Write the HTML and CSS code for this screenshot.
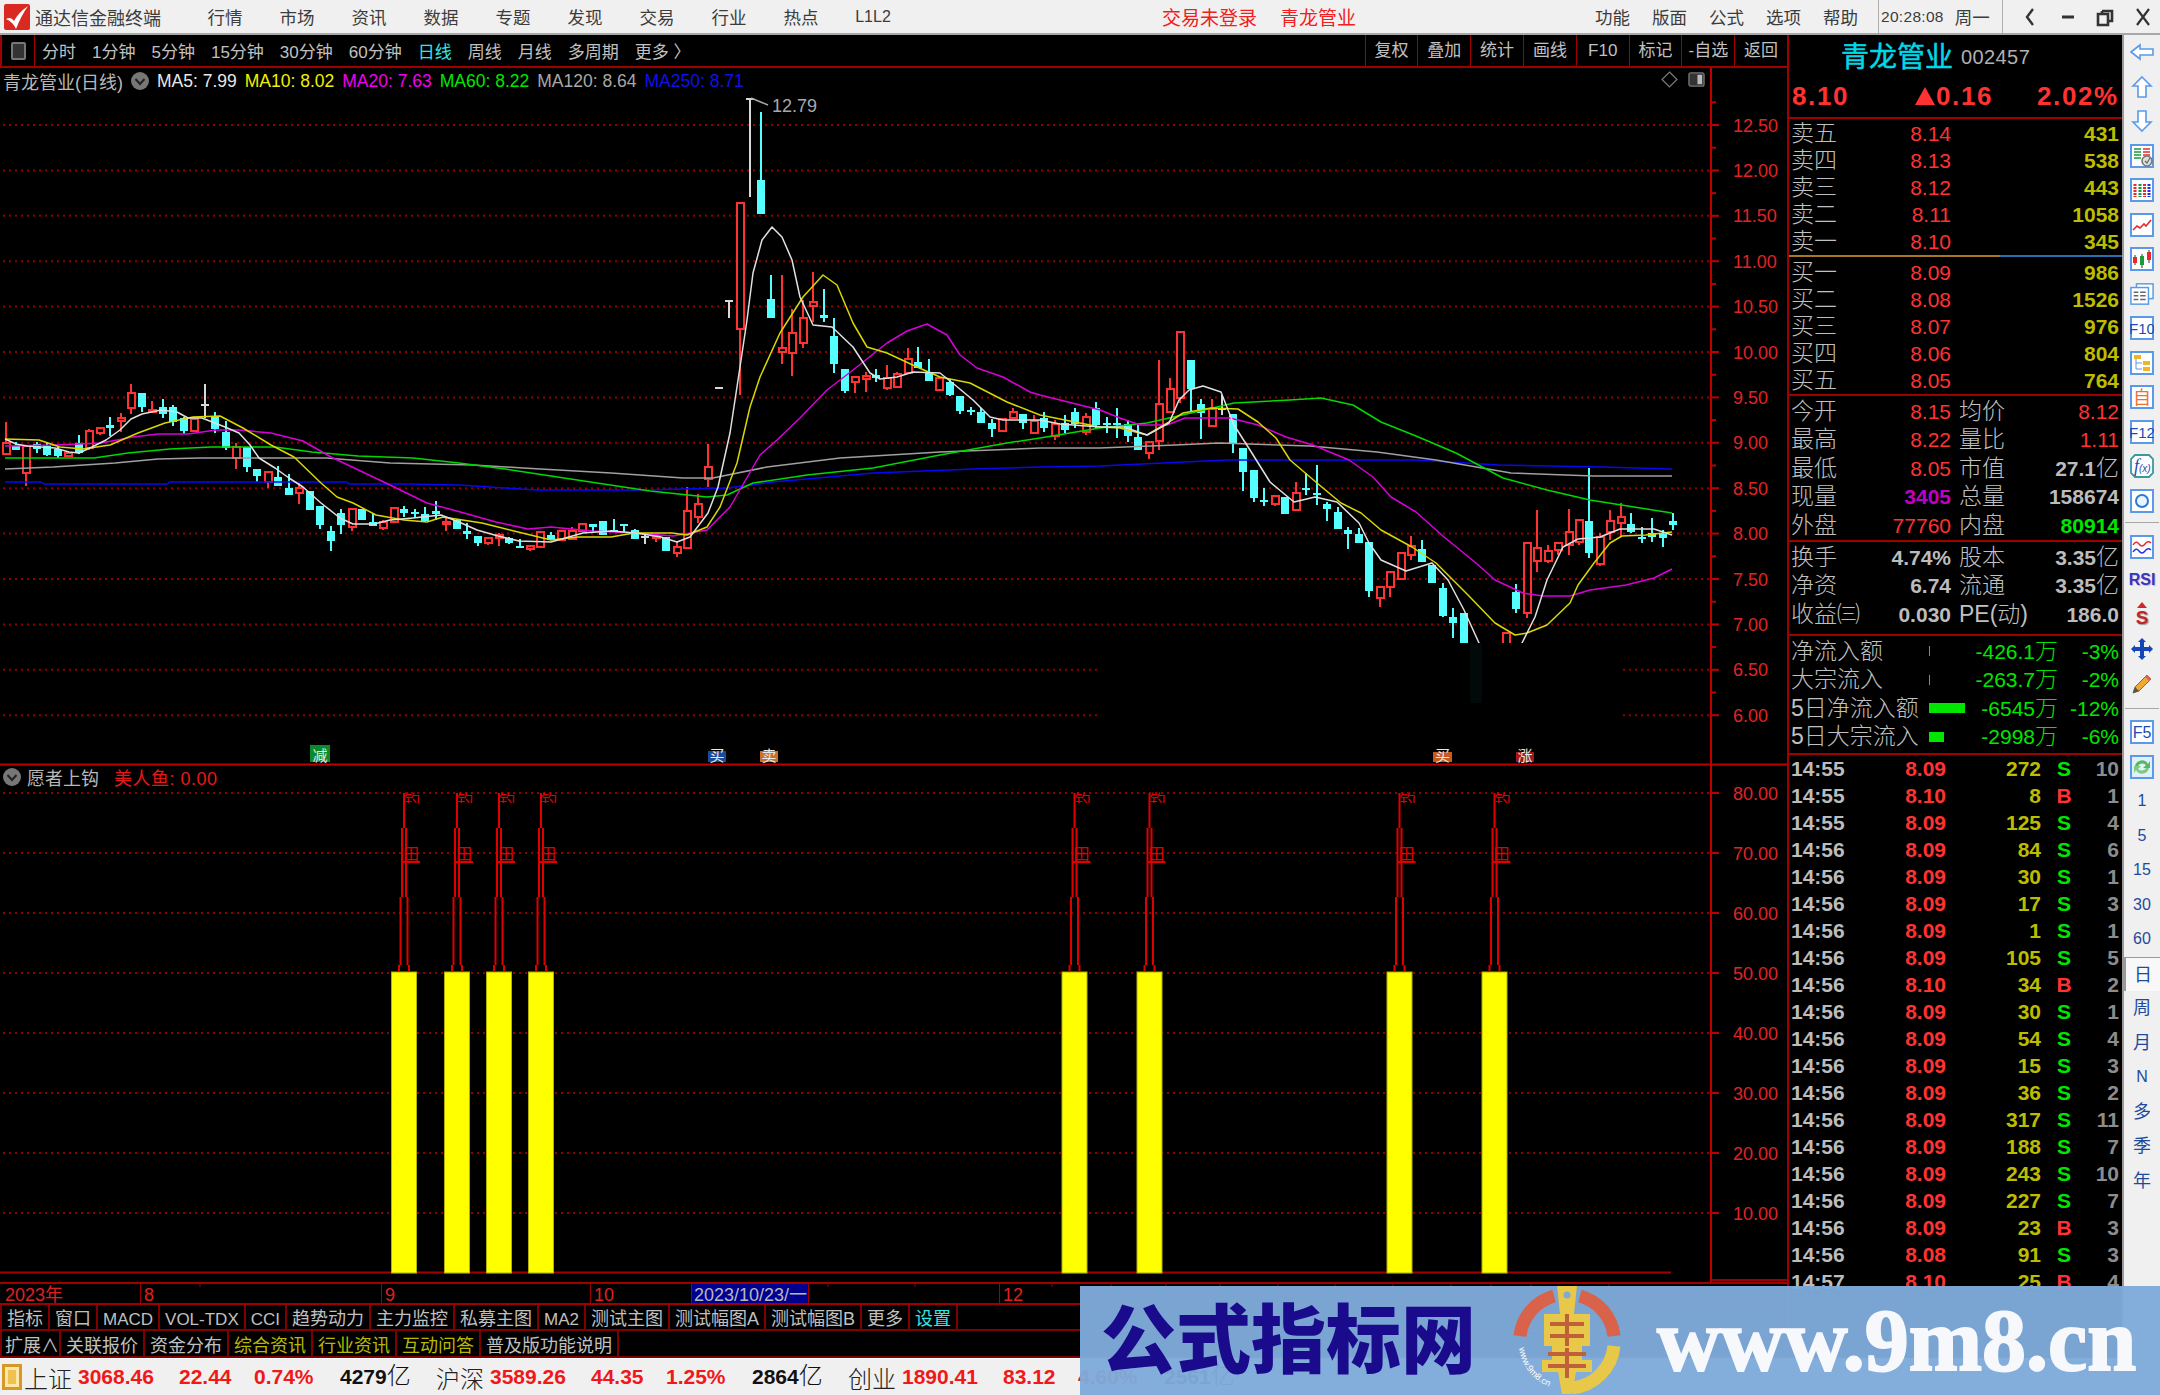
FILE: index.html
```html
<!DOCTYPE html>
<html lang="zh">
<head>
    <meta charset="UTF-8">
    <title>通达信金融终端</title>
    <link rel="stylesheet" href="styles.css">
</head>
<body>
    <div class="titlebar">
        <svg class="app-logo" viewBox="0 0 26 26"><rect width="26" height="26" rx="2" fill="#d92a22"/><path d="M2 15 Q7 12 10 17 Q14 9 24 2 Q17 12 12 25 Q9 18 2 15Z" fill="#fff"/></svg>
        <span class="app-name">通达信金融终端</span>
        <nav class="menu">
            <span>行情</span><span>市场</span><span>资讯</span><span>数据</span><span>专题</span><span>发现</span><span>交易</span><span>行业</span><span>热点</span><span class="l1l2">L1L2</span>
        </nav>
        <span class="notice">交易未登录</span>
        <span class="notice notice-stock">青龙管业</span>
        <nav class="menu menu-right">
            <span>功能</span><span>版面</span><span>公式</span><span>选项</span><span>帮助</span>
        </nav>
        <div class="clock"><span class="clock-time">20:28:08</span><span>周一</span></div>
        <div class="win-btns">
            <svg viewBox="0 0 20 24"><path d="M13 4 L7 12 L13 20" fill="none" stroke="#333" stroke-width="2.4"/></svg>
            <svg viewBox="0 0 20 24"><path d="M4 12 H16" stroke="#333" stroke-width="3"/></svg>
            <svg viewBox="0 0 20 24"><path d="M7 6 H17 V16 H14 M3 9 H13 V20 H3Z M7 6 V9" fill="none" stroke="#333" stroke-width="2.6"/></svg>
            <svg viewBox="0 0 20 24"><path d="M4 4 L16 20 M16 4 L4 20" stroke="#333" stroke-width="2.2"/></svg>
        </div>
    </div>

    <div class="main">
        <div class="left">
            <div class="toolbar">
                <div class="tool-switch"><i></i></div>
                <div class="periods">
                    <span>分时</span><span>1分钟</span><span>5分钟</span><span>15分钟</span><span>30分钟</span><span>60分钟</span><span class="cyan">日线</span><span>周线</span><span>月线</span><span>多周期</span><span>更多 〉</span>
                </div>
                <div class="tool-btns">
                    <span>复权</span><span>叠加</span><span>统计</span><span>画线</span><span>F10</span><span>标记</span><span>-自选</span><span>返回</span>
                </div>
            </div>

            <div class="chart-wrap">
                <svg id="chart" class="chart" viewBox="0 68 1787 1214"></svg>
                <div class="legend">
                    <span class="stock-title">青龙管业(日线)</span>
                    <svg class="chev" viewBox="0 0 18 18"><circle cx="9" cy="9" r="9" fill="#777"/><path d="M4.5 7 L9 12 L13.5 7" fill="none" stroke="#222" stroke-width="2"/></svg>
                    <span class="ma white">MA5: 7.99</span>
                    <span class="ma yellow">MA10: 8.02</span>
                    <span class="ma magenta">MA20: 7.63</span>
                    <span class="ma green">MA60: 8.22</span>
                    <span class="ma gray">MA120: 8.64</span>
                    <span class="ma blue">MA250: 8.71</span>
                </div>
                <div class="legend-icons">
                    <svg viewBox="0 0 16 16"><path d="M8 1 L15 8 L8 15 L1 8Z" fill="none" stroke="#777" stroke-width="1.2"/></svg>
                    <svg viewBox="0 0 18 18"><rect x="1" y="2" width="16" height="14" rx="2" fill="#333" stroke="#777" stroke-width="1.4"/><rect x="10" y="4" width="5" height="10" fill="#bbb"/></svg>
                </div>
                <div class="legend legend-sub">
                    <svg class="chev" viewBox="0 0 18 18"><circle cx="9" cy="9" r="9" fill="#777"/><path d="M4.5 7 L9 12 L13.5 7" fill="none" stroke="#222" stroke-width="2"/></svg>
                    <span class="stock-title">愿者上钩</span>
                    <span class="ma red sub-val"><b>美人鱼</b>: 0.00</span>
                </div>
            </div>

            <div class="date-axis">
                <span class="d-year">2023年</span>
                <span class="d-aug">8</span>
                <span class="d-sep">9</span>
                <span class="d-oct">10</span>
                <span class="d-cur">2023/10/23/一</span>
                <span class="d-nov"></span>
                <span class="d-dec">12</span>
            </div>
            <div class="tabs">
                <span>指标</span><span>窗口</span><span class="tab-en">MACD</span><span class="tab-en">VOL-TDX</span><span class="tab-en">CCI</span><span>趋势动力</span><span>主力监控</span><span>私募主图</span><span class="tab-en">MA2</span><span>测试主图</span><span>测试幅图A</span><span>测试幅图B</span><span>更多</span><span class="cyan">设置</span>
            </div>
            <div class="tabs tabs-b">
                <span class="tab-first">扩展∧</span><span>关联报价</span><span>资金分布</span><span class="olive">综合资讯</span><span class="olive">行业资讯</span><span class="olive">互动问答</span><span>普及版功能说明</span>
            </div>
        </div>

        <div class="quote">
            <div class="q-head"><span class="q-name">青龙管业</span><span class="q-code">002457</span></div>
            <div class="q-price"><span>8.10</span><span class="q-chg"><i class="tri"></i>0.16</span><span>2.02%</span></div>

            <div class="book book-sell">
                <div class="book-row"><span class="lbl">卖五</span><span class="r">8.14</span><span class="y">431</span></div>
                <div class="book-row"><span class="lbl">卖四</span><span class="r">8.13</span><span class="y">538</span></div>
                <div class="book-row"><span class="lbl">卖三</span><span class="r">8.12</span><span class="y">443</span></div>
                <div class="book-row"><span class="lbl">卖二</span><span class="r">8.11</span><span class="y">1058</span></div>
                <div class="book-row"><span class="lbl">卖一</span><span class="r">8.10</span><span class="y">345</span></div>
            </div>
            <div class="book-split"><i></i><b></b></div>
            <div class="book book-buy">
                <div class="book-row"><span class="lbl">买一</span><span class="r">8.09</span><span class="y">986</span></div>
                <div class="book-row"><span class="lbl">买二</span><span class="r">8.08</span><span class="y">1526</span></div>
                <div class="book-row"><span class="lbl">买三</span><span class="r">8.07</span><span class="y">976</span></div>
                <div class="book-row"><span class="lbl">买四</span><span class="r">8.06</span><span class="y">804</span></div>
                <div class="book-row"><span class="lbl">买五</span><span class="r">8.05</span><span class="y">764</span></div>
            </div>

            <div class="stats stats-a">
                <div class="stat-row"><span class="lbl">今开</span><span class="r">8.15</span><i></i><span class="lbl">均价</span><span class="r">8.12</span></div>
                <div class="stat-row"><span class="lbl">最高</span><span class="r">8.22</span><i></i><span class="lbl">量比</span><span class="r">1.11</span></div>
                <div class="stat-row"><span class="lbl">最低</span><span class="r">8.05</span><i></i><span class="lbl">市值</span><span class="g">27.1<em>亿</em></span></div>
                <div class="stat-row"><span class="lbl">现量</span><span class="m">3405</span><i></i><span class="lbl">总量</span><span class="g">158674</span></div>
                <div class="stat-row"><span class="lbl">外盘</span><span class="r">77760</span><i></i><span class="lbl">内盘</span><span class="gr">80914</span></div>
            </div>
            <div class="stats stats-b">
                <div class="stat-row"><span class="lbl">换手</span><span class="g">4.74%</span><i></i><span class="lbl">股本</span><span class="g">3.35<em>亿</em></span></div>
                <div class="stat-row"><span class="lbl">净资</span><span class="g">6.74</span><i></i><span class="lbl">流通</span><span class="g">3.35<em>亿</em></span></div>
                <div class="stat-row"><span class="lbl">收益㈢</span><span class="g">0.030</span><i></i><span class="lbl">PE(动)</span><span class="g">186.0</span></div>
            </div>
            <div class="flows">
                <div class="flow-row"><span class="lbl">净流入额</span><span class="flow-bar"><i class="bar-tick"></i></span><span class="gr">-426.1<em>万</em></span><span class="gr">-3%</span></div>
                <div class="flow-row"><span class="lbl">大宗流入</span><span class="flow-bar"><i class="bar-tick"></i></span><span class="gr">-263.7<em>万</em></span><span class="gr">-2%</span></div>
                <div class="flow-row"><span class="lbl">5日净流入额</span><span class="flow-bar"><i class="bar-long"></i></span><span class="gr">-6545<em>万</em></span><span class="gr">-12%</span></div>
                <div class="flow-row"><span class="lbl">5日大宗流入</span><span class="flow-bar"><i class="bar-short"></i></span><span class="gr">-2998<em>万</em></span><span class="gr">-6%</span></div>
            </div>

            <div class="trades">
                <div class="trade"><span class="g">14:55</span><span class="r">8.09</span><span class="y">272</span><span class="gr">S</span><span class="g2">10</span></div>
                <div class="trade"><span class="g">14:55</span><span class="r">8.10</span><span class="y">8</span><span class="r">B</span><span class="g2">1</span></div>
                <div class="trade"><span class="g">14:55</span><span class="r">8.09</span><span class="y">125</span><span class="gr">S</span><span class="g2">4</span></div>
                <div class="trade"><span class="g">14:56</span><span class="r">8.09</span><span class="y">84</span><span class="gr">S</span><span class="g2">6</span></div>
                <div class="trade"><span class="g">14:56</span><span class="r">8.09</span><span class="y">30</span><span class="gr">S</span><span class="g2">1</span></div>
                <div class="trade"><span class="g">14:56</span><span class="r">8.09</span><span class="y">17</span><span class="gr">S</span><span class="g2">3</span></div>
                <div class="trade"><span class="g">14:56</span><span class="r">8.09</span><span class="y">1</span><span class="gr">S</span><span class="g2">1</span></div>
                <div class="trade"><span class="g">14:56</span><span class="r">8.09</span><span class="y">105</span><span class="gr">S</span><span class="g2">5</span></div>
                <div class="trade"><span class="g">14:56</span><span class="r">8.10</span><span class="y">34</span><span class="r">B</span><span class="g2">2</span></div>
                <div class="trade"><span class="g">14:56</span><span class="r">8.09</span><span class="y">30</span><span class="gr">S</span><span class="g2">1</span></div>
                <div class="trade"><span class="g">14:56</span><span class="r">8.09</span><span class="y">54</span><span class="gr">S</span><span class="g2">4</span></div>
                <div class="trade"><span class="g">14:56</span><span class="r">8.09</span><span class="y">15</span><span class="gr">S</span><span class="g2">3</span></div>
                <div class="trade"><span class="g">14:56</span><span class="r">8.09</span><span class="y">36</span><span class="gr">S</span><span class="g2">2</span></div>
                <div class="trade"><span class="g">14:56</span><span class="r">8.09</span><span class="y">317</span><span class="gr">S</span><span class="g2">11</span></div>
                <div class="trade"><span class="g">14:56</span><span class="r">8.09</span><span class="y">188</span><span class="gr">S</span><span class="g2">7</span></div>
                <div class="trade"><span class="g">14:56</span><span class="r">8.09</span><span class="y">243</span><span class="gr">S</span><span class="g2">10</span></div>
                <div class="trade"><span class="g">14:56</span><span class="r">8.09</span><span class="y">227</span><span class="gr">S</span><span class="g2">7</span></div>
                <div class="trade"><span class="g">14:56</span><span class="r">8.09</span><span class="y">23</span><span class="r">B</span><span class="g2">3</span></div>
                <div class="trade"><span class="g">14:56</span><span class="r">8.08</span><span class="y">91</span><span class="gr">S</span><span class="g2">3</span></div>
                <div class="trade"><span class="g">14:57</span><span class="r">8.10</span><span class="y">25</span><span class="r">B</span><span class="g2">4</span></div>
            </div>
        </div>

        <div class="sidebar">
            <div class="side-btn"><svg viewBox="0 0 24 18"><path d="M1 9 L10 2 V6 H23 V12 H10 V16Z" fill="#fff" stroke="#5a9ae8" stroke-width="1.6"/></svg></div>
            <div class="side-btn"><svg viewBox="0 0 24 24"><path d="M12 2 L21 11 H16 V22 H8 V11 H3Z" fill="#fff" stroke="#5a9ae8" stroke-width="1.6"/></svg></div>
            <div class="side-btn"><svg viewBox="0 0 24 24"><path d="M12 22 L21 13 H16 V2 H8 V13 H3Z" fill="#fff" stroke="#5a9ae8" stroke-width="1.6"/></svg></div>
            <div class="side-btn"><svg viewBox="0 0 24 24"><rect x="1" y="1" width="22" height="22" fill="#fff" stroke="#5a9ae8" stroke-width="2"/><path d="M4 5 H11 M4 8 H11 M4 11 H11 M4 14 H11" stroke="#1a9a3a" stroke-width="1.6"/><path d="M13 5 H20 M13 8 H20 M13 11 H20" stroke="#e62a2a" stroke-width="1.6"/><circle cx="17" cy="17" r="5" fill="#ddd" stroke="#777" stroke-width="1.6"/><path d="M15 17 L17 19 L20 14" fill="none" stroke="#666" stroke-width="1.2"/></svg></div>
            <div class="side-btn"><svg viewBox="0 0 24 24"><rect x="1" y="1" width="22" height="22" fill="#fff" stroke="#5a9ae8" stroke-width="2"/><path d="M5 6 V19" stroke="#e62a2a" stroke-width="3" stroke-dasharray="2 1"/><path d="M10 6 V19" stroke="#1a9a3a" stroke-width="3" stroke-dasharray="2 1"/><path d="M14.5 6 V19" stroke="#e62a2a" stroke-width="3" stroke-dasharray="2 1"/><path d="M19 6 V19" stroke="#2a2ae6" stroke-width="3" stroke-dasharray="2 1"/></svg></div>
            <div class="side-btn"><svg viewBox="0 0 24 24"><rect x="1" y="1" width="22" height="22" fill="#fff" stroke="#5a9ae8" stroke-width="2"/><path d="M3 17 L7 13 L10 15 L14 11 L16 13 L21 7" fill="none" stroke="#e62a2a" stroke-width="1.6"/></svg></div>
            <div class="side-btn"><svg viewBox="0 0 24 24"><rect x="1" y="1" width="22" height="22" fill="#fff" stroke="#5a9ae8" stroke-width="2"/><path d="M5 8 V18 M12 7 V21 M19 3 V16" stroke="#333" stroke-width="1"/><rect x="3" y="10" width="4" height="6" fill="#e62a2a"/><rect x="10" y="9" width="4" height="9" fill="#1a9a3a"/><rect x="17" y="5" width="4" height="8" fill="#e62a2a"/></svg></div>
            <div class="side-btn"><svg viewBox="0 0 26 24"><rect x="7" y="1" width="18" height="16" fill="#fff" stroke="#5a9ae8" stroke-width="1.6"/><rect x="1" y="5" width="19" height="18" fill="#fff" stroke="#5a9ae8" stroke-width="1.6"/><path d="M4 10 H9 M11 10 H17 M4 14 H9 M11 14 H17 M4 18 H9 M11 18 H17" stroke="#666" stroke-width="1.6"/></svg></div>
            <div class="side-btn"><svg viewBox="0 0 24 24"><rect x="1" y="1" width="22" height="22" fill="#fff" stroke="#5a9ae8" stroke-width="2"/><text x="12" y="18" text-anchor="middle" class="ico-f">F10</text></svg></div>
            <div class="side-btn"><svg viewBox="0 0 24 24"><rect x="1" y="1" width="22" height="22" fill="#fff" stroke="#5a9ae8" stroke-width="2"/><path d="M6 8 V18 H12 M6 12 H12" fill="none" stroke="#5a9ae8"/><rect x="4" y="4" width="7" height="4" fill="#f0b428"/><rect x="13" y="10" width="7" height="4" fill="#f0b428"/><rect x="13" y="16" width="7" height="4" fill="#f0b428"/></svg></div>
            <div class="side-btn"><svg viewBox="0 0 24 24"><rect x="1" y="1" width="22" height="22" fill="#fff" stroke="#5a9ae8" stroke-width="2"/><text x="12" y="19" text-anchor="middle" class="ico-z">自</text></svg></div>
            <div class="side-btn"><svg viewBox="0 0 24 24"><rect x="1" y="1" width="22" height="22" fill="#fff" stroke="#5a9ae8" stroke-width="2"/><text x="12" y="18" text-anchor="middle" class="ico-f">F12</text></svg></div>
            <div class="side-btn"><svg viewBox="0 0 24 24"><path d="M5 1 H19 L23 5 V19 L19 23 H5 L1 19 V5Z" fill="#fff" stroke="#3a9a9a" stroke-width="1.8"/><text x="4" y="18" class="ico-fx"><tspan class="ico-fx-big">f</tspan>(x)</text></svg></div>
            <div class="side-btn"><svg viewBox="0 0 24 24"><rect x="1" y="1" width="22" height="22" fill="#fff" stroke="#5a9ae8" stroke-width="2"/><circle cx="12" cy="12" r="6" fill="#eaf4ff" stroke="#2a7ad8" stroke-width="2"/></svg></div>
            <div class="side-sep side-sep-a"></div>
            <div class="side-btn side-wave"><svg viewBox="0 0 24 24"><rect x="1" y="1" width="22" height="22" fill="#fff" stroke="#5a9ae8" stroke-width="2"/><path d="M3 10 Q6 5 9 9 T15 9 T21 8" fill="none" stroke="#e62a2a" stroke-width="1.4"/><path d="M3 17 Q6 12 9 16 T15 16 T21 15" fill="none" stroke="#2a2ae6" stroke-width="1.4"/></svg></div>
            <div class="side-btn"><span class="ico-rsi">RSI</span></div>
            <div class="side-btn side-stack"><i class="ico-up"></i><span class="ico-s">S</span></div>
            <div class="side-btn"><svg viewBox="0 0 24 24"><path d="M12 1 L16 5 H14 V10 H19 V8 L23 12 L19 16 V14 H14 V19 H16 L12 23 L8 19 H10 V14 H5 V16 L1 12 L5 8 V10 H10 V5 H8Z" fill="#1446b8"/></svg></div>
            <div class="side-btn"><svg viewBox="0 0 24 24"><path d="M3 21 L5 15 L17 3 L21 7 L9 19Z" fill="#f0a830" stroke="#8a6a30" stroke-width="1"/><path d="M3 21 L5 15 L9 19Z" fill="#555"/><path d="M17 3 L21 7 L19 9 L15 5Z" fill="#e06060"/></svg></div>
            <div class="side-sep side-sep-b"></div>
            <div class="side-btn"><svg viewBox="0 0 24 24"><rect x="1" y="1" width="22" height="22" fill="#fff" stroke="#5a9ae8" stroke-width="2"/><text x="12" y="18" text-anchor="middle" class="ico-f ico-f5">F5</text></svg></div>
            <div class="side-btn"><svg viewBox="0 0 24 24"><rect x="1" y="1" width="22" height="22" fill="#dff0ff" stroke="#5a9ae8" stroke-width="2"/><path d="M5 11 A7 7 0 0 1 18 9 L20 6 V13 H13 L16 10 A5 5 0 0 0 8 11Z" fill="#5ab85a"/><path d="M19 13 A7 7 0 0 1 6 15 L4 18 V11 H11 L8 14 A5 5 0 0 0 16 13Z" fill="#7ccc7c"/></svg></div>
            <div class="side-txt">1</div><div class="side-txt">5</div><div class="side-txt">15</div><div class="side-txt">30</div><div class="side-txt">60</div>
            <div class="side-txt side-cjk side-on">日</div><div class="side-txt side-cjk">周</div><div class="side-txt side-cjk">月</div><div class="side-txt">N</div><div class="side-txt side-cjk">多</div><div class="side-txt side-cjk">季</div><div class="side-txt side-cjk">年</div>
        </div>
    </div>

    <div class="statusbar">
        <i class="st-icon"></i>
        <span class="st-name">上证</span><span class="st-num st-a">3068.46</span><span class="st-num st-b">22.44</span><span class="st-num st-c">0.74%</span><span class="st-amt">4279<em>亿</em></span>
        <span class="st-name st-next">沪深</span><span class="st-num st-a">3589.26</span><span class="st-num st-b">44.35</span><span class="st-num st-c">1.25%</span><span class="st-amt">2864<em>亿</em></span>
        <span class="st-name st-next">创业</span><span class="st-num st-a">1890.41</span><span class="st-num st-b">83.12</span><span class="st-num st-c">4.60%</span><span class="st-amt">2561<em>亿</em></span>
    </div>

    <div class="watermark">
        <span class="wm-title">公式指标网</span>
        <svg class="wm-logo" viewBox="0 0 110 110">
            <defs><path id="wm-arc" d="M7 62 A48 48 0 0 0 46 103"/></defs>
            <path d="M8 50 A47 47 0 0 1 42 10" fill="none" stroke="#d8624a" stroke-width="13"/>
            <path d="M68 10 A47 47 0 0 1 102 50" fill="none" stroke="#d8624a" stroke-width="13"/>
            <path d="M102 60 A47 47 0 0 1 60 102" fill="none" stroke="#e8c848" stroke-width="13"/>
            <path d="M45 0 H65 L62 28 H78 V60 H70 V74 H80 V86 H64 L60 108 H50 L46 86 H30 V74 H40 V60 H32 V28 H48Z" fill="#e8c848"/>
            <circle cx="55" cy="9" r="3.5" fill="#7ea9d8"/>
            <path d="M38 38 H72 M38 50 H72 M55 28 V60 M36 68 H74 M36 80 H74 M55 62 V92" stroke="#c0603a" stroke-width="4" fill="none"/>
            <text class="wm-arc-text"><textPath href="#wm-arc">www.9m8.cn</textPath></text>
        </svg>
        <span class="wm-url">www.9m8.cn</span>
    </div>

    <script src="chart.js"></script>
</body>
</html>
```

FILE: styles.css
```css
* {
    box-sizing: border-box;
}

body {
    margin: 0;
    width: 2160px;
    height: 1395px;
    overflow: hidden;
    position: relative;
    background: #000;
    color: #c0c0c0;
    font-family: "Liberation Sans", "Noto Sans CJK SC", sans-serif;
}

i, em {
    font-style: normal;
}

/* 标题栏 */
.titlebar {
    height: 35px;
    background: #f0f0f0;
    border-bottom: 2px solid #a8a8a8;
    display: flex;
    align-items: center;
    color: #3c3c3c;
    font-size: 17.5px;
    white-space: nowrap;
}

.app-logo {
    width: 26px;
    height: 26px;
    margin-left: 4px;
}

.app-name {
    margin-left: 5px;
    font-size: 18px;
}

.menu {
    display: flex;
    align-items: center;
    margin-left: 28px;
}

.menu span {
    width: 72px;
    text-align: center;
}

.menu .l1l2 {
    font-size: 16px;
}

.notice {
    margin-left: 253px;
    color: #f02020;
    font-size: 19px;
}

.notice-stock {
    margin-left: 23px;
}

.menu-right {
    margin-left: 228px;
}

.menu-right span {
    width: 57px;
}

.clock {
    margin-left: 9px;
    height: 33px;
    width: 125px;
    border-left: 1px solid #b0b0b0;
    border-right: 1px solid #b0b0b0;
    display: flex;
    align-items: center;
    padding-left: 2px;
    gap: 11px;
}

.clock-time {
    font-size: 15.5px;
    letter-spacing: .3px;
}

.win-btns {
    flex: 1;
    display: flex;
    align-items: center;
    justify-content: space-between;
    padding: 0 7px 0 17px;
}

.win-btns svg {
    width: 20px;
    height: 24px;
}

.main {
    display: flex;
    height: 1323px;
}

.left {
    width: 1787px;
    display: flex;
    flex-direction: column;
    background: #000;
}

/* 周期工具栏 */
.toolbar {
    height: 33px;
    display: flex;
    border-bottom: 2px solid #a00000;
    font-size: 17px;
    white-space: nowrap;
}

.tool-switch {
    width: 35px;
    border-left: 2px solid #a00000;
    border-right: 1px solid #a00000;
    display: flex;
    align-items: center;
    justify-content: center;
}

.tool-switch i {
    width: 15px;
    height: 18px;
    border: 2px solid #777;
    border-radius: 2px;
    background: #333;
}

.periods {
    display: flex;
    align-items: center;
    gap: 16px;
    margin-left: 7px;
    flex: 1;
}

.cyan {
    color: #30e8e8;
}

.tool-btns {
    display: flex;
}

.tool-btns span {
    width: 52.8px;
    border-left: 1px solid #a00000;
    text-align: center;
    line-height: 31px;
}

.chart-wrap {
    position: relative;
    height: 1214px;
}

.chart {
    display: block;
    width: 1787px;
    height: 1214px;
    overflow: visible;
}

.legend {
    position: absolute;
    left: 3px;
    top: 1px;
    height: 24px;
    display: flex;
    align-items: center;
    font-size: 17.5px;
    white-space: nowrap;
}

.legend-sub {
    top: 697px;
    left: 3px;
}

.stock-title {
    font-size: 18px;
    color: #b8b8b8;
}

.chev {
    width: 18px;
    height: 18px;
    margin: 0 8px;
}

.legend-sub .chev {
    margin: 0 6px 0 0;
}

.ma {
    margin-right: 8px;
}

.sub-val {
    margin-left: 15px;
    font-size: 18px;
    letter-spacing: .5px;
}

.sub-val b {
    font-weight: normal;
}

.white { color: #e8e8e8; }
.yellow { color: #f0f000; }
.magenta { color: #f000f0; }
.green { color: #00e800; }
.gray { color: #a8a8a8; }
.blue { color: #1010e8; }
.red { color: #e81818; }
.olive { color: #b8b800; }

.legend-icons {
    position: absolute;
    right: 82px;
    top: 3px;
    display: flex;
    gap: 10px;
}

.legend-icons svg {
    width: 17px;
    height: 17px;
}

/* 日期轴 */
.date-axis {
    height: 23px;
    display: flex;
    border-top: 2px solid #a00000;
    border-bottom: 2px solid #a00000;
    color: #e02020;
    font-size: 18px;
    line-height: 23px;
}

.date-axis span {
    padding-left: 3px;
    border-right: 1px solid #a00000;
    white-space: nowrap;
}

.date-axis .d-year { width: 141px; padding-left: 5px; }
.d-aug { width: 241px; }
.d-sep { width: 209px; }
.d-oct { width: 101px; }
.d-nov { width: 191px; }
.date-axis .d-dec { width: 60px; border-right: 0; }

.date-axis .d-cur {
    width: 117px;
    background: #000090;
    color: #b8b8b8;
    padding-left: 2px;
}

/* 指标切换 */
.tabs {
    height: 26px;
    display: flex;
    font-size: 18px;
    white-space: nowrap;
    border-left: 2px solid #800000;
    border-bottom: 2px solid #800000;
}

.tabs-b {
    height: 27px;
}

.tabs span {
    padding: 5px 5px 0;
    border-right: 2px solid #800000;
    line-height: 19px;
}

.tabs .tab-en {
    font-size: 17px;
}

.tabs-b span {
    padding-top: 6px;
}

.tabs-b .tab-first {
    width: 59px;
    padding-left: 3px;
    padding-right: 0;
}

/* 右侧盘口 */
.quote {
    width: 335px;
    border-left: 2px solid #a00000;
    display: flex;
    flex-direction: column;
    font-size: 21px;
    white-space: nowrap;
}

.q-head {
    height: 40px;
    display: flex;
    align-items: center;
    padding-left: 52px;
}

.q-name {
    color: #00d8e8;
    font-size: 28px;
    -webkit-text-stroke: .5px #00d8e8;
}

.q-code {
    margin: 5px 0 0 8px;
    font-size: 20px;
    letter-spacing: .4px;
    color: #b0b0b0;
}

.q-price {
    height: 44px;
    border-bottom: 2px solid #a00000;
    display: grid;
    grid-template-columns: 123px 122px 83px;
    align-items: center;
    padding-left: 3px;
    font-size: 26px;
    font-weight: bold;
    color: #ff3232;
    letter-spacing: 1.6px;
}

.q-chg {
    display: flex;
    align-items: center;
    gap: 1px;
}

.tri {
    width: 0;
    height: 0;
    border-left: 10px solid transparent;
    border-right: 10px solid transparent;
    border-bottom: 18px solid #ff3232;
}

.book, .stats, .flows {
    padding: 0 3px 0 2px;
}

.book-sell {
    height: 136px;
    padding-top: 1px;
}

.book-buy {
    height: 139px;
    padding-top: 2px;
    border-bottom: 2px solid #a00000;
}

.book-split {
    height: 2px;
    display: flex;
}

.book-split i {
    width: 211px;
    background: #a87820;
}

.book-split b {
    flex: 1;
    background: #2870b0;
}

.book-row {
    height: 27px;
    display: grid;
    grid-template-columns: 60px 100px 168px;
    align-items: center;
}

.lbl {
    font-size: 23px;
    line-height: 27px;
    font-weight: 300;
    color: #c0c0c0;
}

.r, .y, .g, .m, .gr, .g2 {
    text-align: right;
    line-height: 27px;
}

.r { color: #ff3232; }
.y { color: #bcbc00; font-weight: bold; }
.g { color: #bcbcbc; font-weight: bold; }
.g2 { color: #8c8c8c; font-weight: bold; }
.m { color: #c000c0; font-weight: bold; }
.gr { color: #00e600; font-weight: bold; }

.g em, .gr em {
    font-size: 23px;
    font-weight: 300;
    line-height: 0;
}

.stats-a {
    height: 146px;
    padding-top: 1px;
    border-bottom: 2px solid #a00000;
}

.stats-b {
    height: 94px;
    padding-top: 1px;
    border-bottom: 2px solid #a00000;
}

.stat-row {
    height: 28.5px;
    display: grid;
    grid-template-columns: 50px 110px 8px 50px 110px;
    align-items: center;
}

.flows {
    height: 119px;
    padding-top: 1px;
    border-bottom: 2px solid #a00000;
}

.flow-row {
    height: 28.5px;
    display: grid;
    grid-template-columns: 138px 40px 89px 61px;
    align-items: center;
}

.flow-row .gr {
    font-weight: normal;
}

.flow-bar {
    display: flex;
    align-items: center;
}

.flow-bar i {
    display: block;
    background: #00e600;
}

.bar-tick { width: 1px; height: 10px; }
.bar-long { width: 36px; height: 10px; }
.bar-short { width: 15px; height: 10px; }

.trades {
    flex: 1;
    overflow: hidden;
    padding: 0 3px 0 2px;
}

.trade {
    height: 27px;
    display: grid;
    grid-template-columns: 60px 95px 95px 46px 32px;
    align-items: center;
    font-weight: bold;
}

.trade span:first-child {
    text-align: left;
}

.trade .r {
    font-weight: bold;
}

.trade span:nth-child(4) {
    text-align: center;
}

/* 侧边按钮 */
.sidebar {
    flex: 1;
    background: #f0f0f0;
    border-left: 2px solid #9a9a9a;
    display: flex;
    flex-direction: column;
    align-items: stretch;
}

.side-btn {
    height: 34.5px;
    display: flex;
    align-items: center;
    justify-content: center;
}

.side-btn svg {
    width: 24px;
    height: 24px;
}

.side-stack {
    flex-direction: column;
}

.side-wave {
    margin-bottom: -1.5px;
}

.side-sep {
    height: 1px;
    background: #a8a8a8;
    margin: 0 1px;
}

.side-sep-a {
    margin-top: 4px;
    margin-bottom: 7px;
}

.side-sep-b {
    margin-top: 7px;
    margin-bottom: 6px;
}

.ico-f {
    font-size: 15px;
    fill: #1f4ab8;
}

.ico-f5 {
    font-size: 16px;
}

.ico-z {
    font-size: 18px;
    fill: #f07030;
}

.ico-fx {
    font-size: 10px;
    fill: #1f4ab8;
    font-style: italic;
}

.ico-fx-big {
    font-size: 18px;
    font-family: "Liberation Serif", serif;
}

.ico-rsi {
    font-size: 16px;
    font-weight: bold;
    color: #2c3cb8;
    text-shadow: 1px 1px 0 #e8a8d8;
}

.ico-up {
    width: 0;
    height: 0;
    border-left: 5px solid transparent;
    border-right: 5px solid transparent;
    border-bottom: 6px solid #d02828;
}

.ico-s {
    font-size: 19px;
    line-height: 19px;
    font-weight: bold;
    color: #c02828;
    text-shadow: 1px 1px 1px #999;
}

.side-txt {
    height: 34.5px;
    line-height: 34.5px;
    text-align: center;
    font-size: 16px;
    color: #1f4a9c;
}

.side-cjk {
    font-size: 18px;
}

.side-on {
    background: #f8f8f8;
    border-top: 1px solid #999;
    border-left: 2px solid #999;
}

/* 底部行情条 */
.statusbar {
    height: 37px;
    background: #f0f0f0;
    border-top: 1px solid #fff;
    display: flex;
    align-items: center;
    white-space: nowrap;
    color: #222;
}

.st-icon {
    width: 20px;
    height: 26px;
    margin-left: 2px;
    background: #f0c050;
    border: 3px solid #d89828;
    box-shadow: inset 0 0 0 3px #fbe8a8;
}

.st-name {
    margin-left: 2px;
    width: 50px;
    font-size: 24px;
    font-weight: 300;
}

.st-next {
    margin-left: 28px;
}

.st-num {
    font-size: 21px;
    font-weight: bold;
    color: #f01818;
}

.st-a { margin-left: 4px; width: 80px; }
.st-b { margin-left: 21px; width: 54px; }
.st-c { margin-left: 21px; width: 60px; }

.st-amt {
    margin-left: 26px;
    width: 68px;
    font-size: 21px;
    font-weight: bold;
    color: #111;
}

.st-amt em {
    font-size: 24px;
    font-weight: 300;
    line-height: 0;
}

/* 水印 */
.watermark {
    position: absolute;
    left: 1080px;
    top: 1286px;
    right: 0;
    bottom: 0;
    background: rgba(126, 170, 217, 0.965);
    display: flex;
    align-items: center;
    white-space: nowrap;
}

.wm-title {
    margin-left: 21px;
    font-size: 75px;
    line-height: 90px;
    font-weight: 900;
    color: #1a0a8c;
}

.wm-logo {
    width: 110px;
    height: 110px;
    margin-left: 36px;
}

.wm-arc-text {
    font-size: 9px;
    fill: #fff;
}

.wm-url {
    margin-left: 35px;
    font-family: "Liberation Serif", serif;
    font-size: 88px;
    font-weight: bold;
    color: #f6f8fc;
    -webkit-text-stroke: 2px #f6f8fc;
}
```

FILE: chart.js
```js
// K线数据都是按屏幕像素记的: [类型, 实体上沿, 实体下沿, 上影, 下影]
// r=阳线 c=阴线 w=十字白线
const candles = [
    ['r',443,454,422,455],['c',446,450,442,450],['r',446,473,445,486],['c',444,449,442,453],['c',446,455,442,456],
    ['c',449,456,447,458],['r',453,456,451,457],['c',443,453,435,454],['r',431,448,429,450],['r',428,433,427,435],
    ['c',425,428,417,436],['r',418,421,413,432],['r',393,408,384,414],['c',393,407,393,412],['r',410,412,401,412],
    ['c',407,414,399,418],['c',407,422,405,426],['c',418,431,417,434],['r',419,431,419,431],['w',404,405,384,418],
    ['c',417,429,412,433],['c',432,448,421,450],['r',447,458,443,469],['c',447,467,447,472],['c',469,476,469,482],
    ['r',472,482,472,488],['c',477,486,466,486],['c',488,495,474,495],['r',488,493,483,504],['c',491,510,491,510],
    ['c',506,525,506,529],['c',531,541,526,551],['c',513,525,509,534],['r',509,527,509,531],['c',509,520,509,520],
    ['c',522,526,513,526],['r',522,528,520,530],['r',508,522,508,522],['c',509,513,506,517],['c',512,513,509,518],
    ['c',514,521,507,522],['c',511,514,501,520],['r',522,523,517,531],['c',520,529,519,529],['c',531,534,523,539],
    ['c',536,543,536,546],['r',538,543,538,545],['r',535,538,533,546],['c',538,543,537,544],['c',546,547,539,548],
    ['r',546,549,545,551],['r',532,547,532,547],['c',535,540,532,540],['r',531,540,531,540],['r',531,539,527,540],
    ['r',524,531,524,531],['c',524,527,524,532],['c',521,535,521,535],['c',530,531,519,532],['c',524,526,524,533],
    ['c',530,539,529,539],['w',536,537,535,544],['r',536,538,536,542],['c',537,551,537,551],['r',547,553,542,557],
    ['r',511,548,487,548],['r',504,517,494,523],['r',467,479,444,487],['w',387,388,387,388],['w',300,302,300,318],
    ['r',203,329,203,395],['w',98,100,98,197],['c',180,214,112,214],['c',299,318,275,318],['r',348,352,275,364],
    ['r',333,353,309,376],['r',318,343,300,348],['r',302,306,272,322],['c',315,318,289,322],['c',336,364,318,373],
    ['c',369,391,369,393],['r',377,382,377,393],['r',376,379,372,392],['c',375,378,369,382],['r',378,388,365,390],
    ['r',374,387,372,387],['r',359,373,348,373],['c',362,368,347,368],['c',373,381,359,381],['r',378,390,378,390],
    ['c',382,395,379,396],['c',396,411,396,414],['c',410,411,407,415],['c',412,423,408,423],['c',423,429,419,437],
    ['r',419,431,419,431],['r',412,418,408,418],['c',414,423,414,429],['r',421,433,415,433],['c',418,428,412,432],
    ['r',424,436,420,440],['c',423,430,415,433],['c',412,424,408,428],['r',417,432,413,435],['c',408,425,402,428],
    ['c',423,425,417,433],['c',423,425,408,438],['c',424,436,420,442],['c',437,450,425,450],['r',442,453,441,459],
    ['r',404,441,360,450],['r',389,412,378,412],['r',332,398,331,403],['c',360,389,360,412],['c',404,413,399,439],
    ['r',409,426,399,427],['w',408,409,395,415],['c',414,443,414,453],['c',448,472,448,491],['c',470,498,470,502],
    ['c',500,502,488,506],['r',496,504,496,506],['c',497,514,497,514],['r',493,510,482,510],['c',488,490,473,495],
    ['c',493,495,465,505],['c',504,509,502,521],['c',512,529,507,529],['c',530,534,527,549],['c',534,543,528,543],
    ['c',542,591,542,597],['r',587,598,587,607],['r',572,587,572,597],['r',553,579,553,579],['r',546,555,536,560],
    ['c',549,562,540,562],['c',565,583,565,583],['c',588,616,583,617],['c',617,623,608,638],['c',613,660,613,660],
    null,null,null,['r',633,660,633,660],['c',592,609,584,613],
    ['r',543,613,543,618],['r',548,561,510,572],['r',551,561,545,563],['r',543,550,542,555],['r',532,545,509,555],
    ['r',520,542,520,545],['c',521,553,468,558],['r',537,564,533,566],['r',521,532,510,540],['r',517,523,503,537],
    ['c',524,532,513,533],['c',537,538,527,543],['c',533,537,518,542],['c',534,538,530,547],['c',521,525,513,530]
];

const lines = {
    '#e0e0e0': [[[5,439],[16,444],[27,446],[41,447],[55,448],[69,452],[79,453],[92,447],[106,440],[120,430],[131,419],[142,414],[161,410],[177,412],[188,418],[202,418],[225,427],[239,433],[250,445],[259,458],[275,468],[289,478],[303,487],[321,503],[340,518],[353,524],[374,524],[390,520],[413,518],[441,515],[459,522],[477,530],[498,536],[519,541],[551,542],[583,533],[611,531],[636,533],[661,537],[677,542],[690,537],[708,513],[718,487],[730,433],[740,367],[747,320],[753,273],[762,240],[772,227],[782,237],[792,260],[800,297],[813,325],[832,327],[853,347],[870,373],[880,379],[897,377],[913,372],[940,373],[955,385],[973,400],[990,417],[1003,420],[1040,420],[1060,424],[1100,427],[1124,427],[1147,435],[1169,423],[1179,400],[1189,390],[1203,386],[1221,392],[1234,425],[1250,450],[1270,482],[1294,502],[1315,497],[1337,502],[1359,523],[1369,543],[1381,560],[1406,571],[1432,563],[1448,580],[1464,610],[1479,643],[1500,662],[1522,643],[1535,617],[1547,580],[1563,547],[1578,539],[1600,537],[1620,529],[1654,529],[1672,535]]],
    '#d8d800': [[[5,439],[39,440],[60,447],[83,449],[110,445],[138,433],[165,423],[193,417],[220,416],[243,428],[271,445],[294,457],[321,483],[337,497],[353,503],[376,515],[404,520],[427,522],[443,517],[482,523],[514,531],[551,540],[578,537],[611,537],[634,533],[672,533],[687,535],[707,527],[720,507],[737,463],[750,407],[760,377],[780,333],[803,297],[823,275],[837,285],[853,323],[867,347],[887,353],[917,367],[940,377],[970,383],[1007,402],[1040,415],[1100,427],[1120,428],[1147,435],[1169,422],[1183,413],[1211,408],[1238,409],[1258,422],[1276,438],[1290,460],[1317,483],[1341,503],[1361,513],[1381,530],[1412,547],[1436,563],[1468,595],[1495,623],[1515,635],[1527,633],[1547,625],[1570,603],[1578,585],[1594,563],[1610,543],[1622,536],[1646,535],[1672,532]]],
    '#d800d8': [[[5,446],[55,445],[101,443],[133,437],[158,434],[188,434],[216,430],[239,430],[271,433],[303,441],[331,457],[390,485],[427,503],[464,513],[496,522],[528,529],[551,527],[592,531],[634,533],[673,536],[707,530],[730,507],[760,455],[777,440],[800,418],[827,390],[853,370],[887,343],[907,331],[927,324],[947,335],[960,355],[977,368],[1003,377],[1030,392],[1040,395],[1100,410],[1120,418],[1140,425],[1167,425],[1185,418],[1230,418],[1258,425],[1286,437],[1313,445],[1349,460],[1373,477],[1391,497],[1416,512],[1444,537],[1476,563],[1495,580],[1523,593],[1543,596],[1570,596],[1590,590],[1626,585],[1654,578],[1672,569]]],
    '#00d800': [[[5,458],[94,458],[128,453],[170,449],[211,447],[275,447],[312,452],[358,456],[413,458],[459,463],[505,469],[551,476],[597,483],[650,491],[707,497],[727,495],[753,483],[807,475],[873,468],[940,455],[1007,443],[1040,438],[1100,428],[1147,423],[1191,413],[1234,403],[1290,400],[1321,398],[1353,405],[1381,422],[1416,436],[1456,453],[1503,478],[1547,490],[1590,500],[1634,507],[1672,513]]],
    '#a0a0a0': [[[5,469],[53,467],[115,463],[158,459],[200,458],[326,458],[390,463],[473,465],[523,468],[611,473],[683,478],[713,478],[767,467],[840,458],[940,452],[1040,448],[1100,448],[1175,445],[1219,443],[1310,446],[1377,452],[1436,460],[1511,473],[1594,476],[1672,476]]],
    '#0808f0': [[[5,482],[41,482],[44,484],[168,484],[169,482],[347,482],[349,484],[409,484],[459,485],[505,488],[537,490],[640,490],[727,488],[773,482],[873,473],[973,469],[1040,467],[1100,466],[1163,463],[1226,460],[1416,460],[1499,465],[1602,467],[1672,469]]]
};

const barCenters = [404, 457, 499, 541, 1074.5, 1149.5, 1399.5, 1494.5];
const dateTicks = [200, 828, 915, 1052, 1111, 1166, 1220, 1278, 1335, 1393, 1451, 1491, 1531, 1609];

let svg = '<defs><clipPath id="top-cut"><rect x="0" y="790" width="1711" height="13"/></clipPath></defs>';

function line(x1, y1, x2, y2, color, w, extra) {
    svg += `<line x1="${x1}" y1="${y1}" x2="${x2}" y2="${y2}" stroke="${color}" stroke-width="${w}" ${extra || ''}/>`;
}

function label(x, y, txt) {
    svg += `<text x="${x}" y="${y}" fill="#e02424" font-size="18">${txt}</text>`;
}

// 主图网格和价格轴
for (let i = 0; i <= 13; i++) {
    const y = 125 + i * 45.4;
    line(3, y, 1711, y, '#900000', 2, 'stroke-dasharray="2 4"');
    line(1711, y, 1719, y, '#c00000', 2);
    label(1733, y + 6.5, (12.5 - i * 0.5).toFixed(2));
    line(1711, y - 22.7, 1716, y - 22.7, '#c00000', 2);
}

// 幅图网格
for (let v = 10; v <= 80; v += 10) {
    const y = 1273 - v * 6;
    line(3, y, 1711, y, '#900000', 2, 'stroke-dasharray="2 4"');
    line(1711, y, 1719, y, '#c00000', 2);
    label(1733, y + 7, v.toFixed(2));
}

// K线
candles.forEach((c, i) => {
    if (!c) return;
    const x = Math.round(5.5 + i * 10.49);
    const color = c[0] === 'r' ? '#ff3232' : c[0] === 'c' ? '#54ffff' : '#d8d8d8';
    line(x, c[3], x, c[4], color, 2);
    const h = Math.max(c[2] - c[1], 2);
    if (c[0] === 'r') {
        svg += `<rect x="${x - 3.5}" y="${c[1]}" width="7" height="${h}" fill="#000" stroke="${color}" stroke-width="2"/>`;
    } else {
        svg += `<rect x="${x - 4}" y="${c[1]}" width="8" height="${h}" fill="${color}"/>`;
    }
});
svg = svg.replace(/<rect x/g, '<rect shape-rendering="crispEdges" x');

// 均线
Object.keys(lines).reverse().forEach(color => {
    lines[color].forEach(pts => {
        svg += `<polyline points="${pts.join(' ')}" fill="none" stroke="${color}" stroke-width="1.5" stroke-linejoin="round"/>`;
    });
});

// 最高价标注
line(751, 98, 768, 105, '#a8a8a8', 1.5);
svg += '<text x="772" y="112" fill="#a8a8a8" font-size="18">12.79</text>';

// 图下被遮挡的一块
svg += '<rect x="1100" y="643" width="522" height="100" fill="#000"/>';
svg += '<rect x="1470" y="643" width="12" height="60" fill="#020909"/>';

// 信号小标
const tags = [[310, 745, 20, 17, '#0a8a2a', '减'], [708, 751, 18, 11, '#1a4a9a', '买'], [760, 751, 18, 11, '#c87028', '卖'], [1433, 752, 19, 10, '#c85a20', '买'], [1516, 752, 18, 10, '#a01818', '涨']];
tags.forEach(t => {
    svg += `<rect x="${t[0]}" y="${t[1]}" width="${t[2]}" height="${t[3]}" fill="${t[4]}"/>`;
    svg += `<text x="${t[0] + t[2] / 2}" y="${t[1] + t[3] - 1}" text-anchor="middle" fill="#e8e8e8" font-size="15">${t[5]}</text>`;
});

// 分隔线和坐标轴
line(0, 764.5, 1787, 764.5, '#c00000', 2);
line(1711, 68, 1711, 1282, '#c00000', 2);
line(0, 1272.5, 1671, 1272.5, '#a00000', 2);
line(1711, 1280, 1787, 1280, '#a00000', 2);

// 黄柱和上面的红色信号
barCenters.forEach(cx => {
    svg += `<rect x="${cx - 12.5}" y="972" width="25" height="301" fill="#ffff00" stroke="#b0b000" stroke-width="1"/>`;
    const r = '#e00000';
    line(cx, 793, cx, 828, r, 2);
    [[2, 828, 897], [3.5, 897, 965], [5, 965, 972]].forEach(s => {
        line(cx - s[0], s[1], cx - s[0], s[2], r, 2);
        line(cx + s[0], s[1], cx + s[0], s[2], r, 2);
    });
    svg += `<text x="${cx}" y="806" fill="${r}" font-size="16" clip-path="url(#top-cut)">钓</text>`;
    svg += `<text x="${cx - 1}" y="860" fill="${r}" font-size="16">田</text>`;
    line(cx - 2, 862, cx + 16, 862, r, 2);
});

// 日期轴上的小刻度(大多被水印盖住)
dateTicks.forEach(x => line(x, 1283, x, 1287, '#a00000', 1));

document.getElementById('chart').innerHTML = svg;
```
